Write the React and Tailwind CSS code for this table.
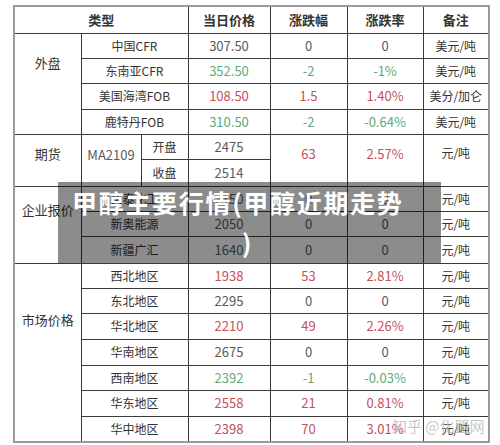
import React from "react";

const RED = "text-[#c4505c]";
const GREEN = "text-[#5fa97c]";
const GRAY = "text-[#5a5a5a]";

const cellB = "border border-[#3a3a3a]";

function Num({ v, c }) {
  const cls = c === "r" ? RED : c === "g" ? GREEN : GRAY;
  return <td className={`${cellB} ${cls} text-center text-[13px]`}>{v}</td>;
}

function Unit({ v, rs, extra = "" }) {
  return (
    <td rowSpan={rs} className={`${cellB} text-center text-[12px] text-[#333] ${extra}`}>
      {v}
    </td>
  );
}

function Name({ v }) {
  return (
    <td colSpan={2} className={`${cellB} text-center text-[12px] text-[#333]`}>
      {v}
    </td>
  );
}

export default function App() {
  const font = { fontFamily: '"Noto Sans CJK SC", "Noto Sans", sans-serif' };
  return (
    <div className="relative w-[500px] h-[445px] bg-white overflow-hidden" style={font}>
      <div className="pt-[5px] pl-[13px]">
        <table className="table-fixed border-collapse border-2 border-[#9a9a9a] w-[475px]">
          <colgroup>
            <col className="w-[67px]" />
            <col className="w-[60px]" />
            <col className="w-[47px]" />
            <col className="w-[82px]" />
            <col className="w-[77px]" />
            <col className="w-[76px]" />
            <col className="w-[66px]" />
          </colgroup>
          <tbody>
            <tr className="h-[27px]">
              <th colSpan={3} className={`${cellB} text-[13px] font-bold text-[#333]`}>类型</th>
              <th className={`${cellB} text-[13px] font-bold text-[#333]`}>当日价格</th>
              <th className={`${cellB} text-[13px] font-bold text-[#333]`}>涨跌幅</th>
              <th className={`${cellB} text-[13px] font-bold text-[#333]`}>涨跌率</th>
              <th className={`${cellB} text-[13px] font-bold text-[#333]`}>备注</th>
            </tr>
            <tr className="h-[25px]">
              <td rowSpan={4} className={`${cellB} align-top pt-[19px] text-center text-[13px] text-[#333]`}>外盘</td>
              <Name v="中国CFR" />
              <Num v="307.50" />
              <Num v="0" />
              <Num v="0" />
              <Unit v="美元/吨" />
            </tr>
            <tr className="h-[25px]">
              <Name v="东南亚CFR" />
              <Num v="352.50" c="g" />
              <Num v="-2" c="g" />
              <Num v="-1%" c="g" />
              <Unit v="美元/吨" />
            </tr>
            <tr className="h-[26px]">
              <Name v="美国海湾FOB" />
              <Num v="108.50" c="r" />
              <Num v="1.5" c="r" />
              <Num v="1.40%" c="r" />
              <Unit v="美分/加仑" />
            </tr>
            <tr className="h-[25px]">
              <Name v="鹿特丹FOB" />
              <Num v="310.50" c="g" />
              <Num v="-2" c="g" />
              <Num v="-0.64%" c="g" />
              <Unit v="美元/吨" />
            </tr>
            <tr className="h-[25px]">
              <td rowSpan={2} className={`${cellB} align-top pt-[9px] text-center text-[13px] text-[#333]`}>期货</td>
              <td rowSpan={2} className={`${cellB} align-top pt-[10px] text-center text-[13px] ${GRAY}`}>MA2109</td>
              <td className={`${cellB} text-center text-[12px] text-[#333]`}>开盘</td>
              <Num v="2475" />
              <td rowSpan={2} className={`${cellB} align-top pt-[9px] text-center text-[13px] ${RED}`}>63</td>
              <td rowSpan={2} className={`${cellB} align-top pt-[9px] text-center text-[13px] ${RED}`}>2.57%</td>
              <Unit v="元/吨" rs={2} extra="align-top pt-[9px]" />
            </tr>
            <tr className="h-[27px]">
              <td className={`${cellB} text-center text-[12px] text-[#333]`}>收盘</td>
              <Num v="2514" />
            </tr>
            <tr className="h-[25px]">
              <td rowSpan={3} className={`${cellB} align-top pt-[13px] text-center text-[13px] text-[#333]`}>企业报价</td>
              <Name v="久泰化工" />
              <Num v="2150" />
              <Num v="0" />
              <Num v="0" />
              <Unit v="元/吨" />
            </tr>
            <tr className="h-[25px]">
              <Name v="新奥能源" />
              <Num v="2050" />
              <Num v="0" />
              <Num v="0" />
              <Unit v="元/吨" />
            </tr>
            <tr className="h-[27px]">
              <Name v="新疆广汇" />
              <Num v="1640" />
              <Num v="0" />
              <Num v="0" />
              <Unit v="元/吨" />
            </tr>
            <tr className="h-[25px]">
              <td rowSpan={7} className={`${cellB} align-top pt-[46px] text-center text-[13px] text-[#333]`}>市场价格</td>
              <Name v="西北地区" />
              <Num v="1938" c="r" />
              <Num v="53" c="r" />
              <Num v="2.81%" c="r" />
              <Unit v="元/吨" />
            </tr>
            <tr className="h-[25px]">
              <Name v="东北地区" />
              <Num v="2295" />
              <Num v="0" />
              <Num v="0" />
              <Unit v="元/吨" />
            </tr>
            <tr className="h-[26px]">
              <Name v="华北地区" />
              <Num v="2210" c="r" />
              <Num v="49" c="r" />
              <Num v="2.26%" c="r" />
              <Unit v="元/吨" />
            </tr>
            <tr className="h-[26px]">
              <Name v="华南地区" />
              <Num v="2675" />
              <Num v="0" />
              <Num v="0" />
              <Unit v="元/吨" />
            </tr>
            <tr className="h-[25px]">
              <Name v="西南地区" />
              <Num v="2392" c="g" />
              <Num v="-1" c="g" />
              <Num v="-0.03%" c="g" />
              <Unit v="元/吨" />
            </tr>
            <tr className="h-[26px]">
              <Name v="华东地区" />
              <Num v="2558" c="r" />
              <Num v="21" c="r" />
              <Num v="0.81%" c="r" />
              <Unit v="元/吨" />
            </tr>
            <tr className="h-[26px]">
              <Name v="华中地区" />
              <Num v="2398" c="r" />
              <Num v="70" c="r" />
              <Num v="3.01%" c="r" />
              <Unit v="元/吨" />
            </tr>
          </tbody>
        </table>
      </div>

      <div className="absolute left-[58px] top-[182px] w-[383px] h-[81px] bg-black/45 text-white font-bold text-[25px] leading-[40px]">
        <div className="pl-[14px] tracking-[1.7px] whitespace-nowrap">甲醇主要行情(甲醇近期走势</div>
        <div className="pl-[184px]">)</div>
      </div>

      <div className="absolute left-[392px] top-[415px] text-[15px] text-[#b8b8b8]/80 whitespace-nowrap">
        知乎 @化盟网
      </div>
    </div>
  );
}
